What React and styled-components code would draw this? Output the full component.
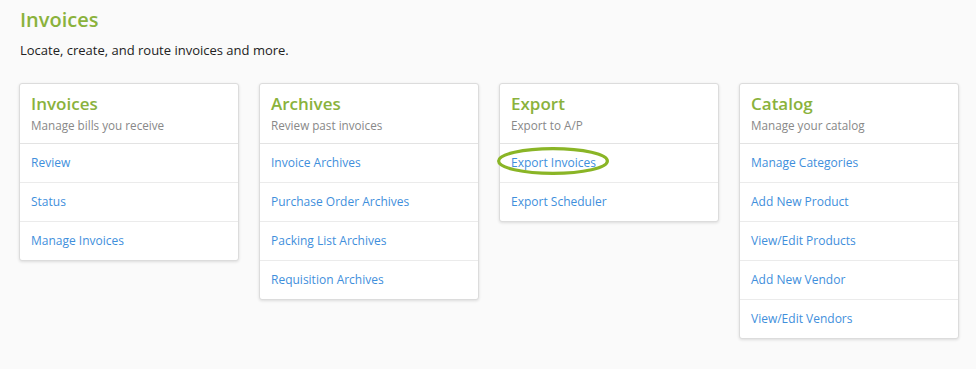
import React from 'react';
import styled, { createGlobalStyle } from 'styled-components';

const GlobalStyle = createGlobalStyle`
  body {
    margin: 0;
    background: #fafafa;
    font-family: 'Open Sans', 'Liberation Sans', sans-serif;
  }
`;

const Page = styled.div`
  padding: 8px 19px 20px;
`;

const PageTitle = styled.h1`
  margin: 0 0 0 1px;
  font-size: 20px;
  line-height: 24px;
  font-weight: 600;
  color: #8ab23c;
`;

const PageLead = styled.p`
  margin: 8px 0 0 1px;
  font-size: 13px;
  line-height: 20px;
  color: #222;
`;

const Cards = styled.div`
  display: grid;
  grid-template-columns: repeat(4, 220px);
  column-gap: 20px;
  align-items: start;
  margin-top: 23px;
`;

const Card = styled.div`
  background: #fff;
  border: 1px solid #dcdcdc;
  border-radius: 3px;
  box-shadow: 0 1px 3px rgba(0, 0, 0, 0.12);
`;

const CardHeader = styled.div`
  padding: 9px 11px 8px;
  border-bottom: 1px solid #e3e3e3;
`;

const CardTitle = styled.h2`
  margin: 0;
  font-size: 17px;
  line-height: 22px;
  font-weight: 600;
  color: #8ab23c;
`;

const CardSub = styled.div`
  font-size: 11.7px;
  line-height: 20px;
  color: #888;
`;

const Row = styled.div`
  position: relative;
  padding: 9px 11px 9px;
  font-size: 12px;
  line-height: 20px;
  border-top: ${({ first }) => (first ? 'none' : '1px solid #ebebeb')};
`;

const Link = styled.a`
  color: #3f8fdc;
  text-decoration: none;
  cursor: pointer;
`;

const Circle = styled.svg`
  position: absolute;
  left: -3px;
  top: 3px;
  width: 112px;
  height: 28px;
  pointer-events: none;
  overflow: visible;
`;

const sections = [
  {
    title: 'Invoices',
    sub: 'Manage bills you receive',
    links: ['Review', 'Status', 'Manage Invoices'],
  },
  {
    title: 'Archives',
    sub: 'Review past invoices',
    links: [
      'Invoice Archives',
      'Purchase Order Archives',
      'Packing List Archives',
      'Requisition Archives',
    ],
  },
  {
    title: 'Export',
    sub: 'Export to A/P',
    links: ['Export Invoices', 'Export Scheduler'],
    marked: 'Export Invoices',
  },
  {
    title: 'Catalog',
    sub: 'Manage your catalog',
    links: [
      'Manage Categories',
      'Add New Product',
      'View/Edit Products',
      'Add New Vendor',
      'View/Edit Vendors',
    ],
  },
];

const App = () => (
  <>
    <GlobalStyle />
    <Page>
      <PageTitle>Invoices</PageTitle>
      <PageLead>Locate, create, and route invoices and more.</PageLead>
      <Cards>
        {sections.map(({ title, sub, links, marked }) => (
          <Card key={title}>
            <CardHeader>
              <CardTitle>{title}</CardTitle>
              <CardSub>{sub}</CardSub>
            </CardHeader>
            {links.map((link, i) => (
              <Row key={link} first={i === 0}>
                <Link>{link}</Link>
                {marked === link && (
                  <Circle viewBox="0 0 112 28">
                    <ellipse
                      cx="56"
                      cy="14"
                      rx="54.4"
                      ry="12.4"
                      fill="none"
                      stroke="#8ab526"
                      strokeWidth="3.2"
                    />
                  </Circle>
                )}
              </Row>
            ))}
          </Card>
        ))}
      </Cards>
    </Page>
  </>
);

export default App;
